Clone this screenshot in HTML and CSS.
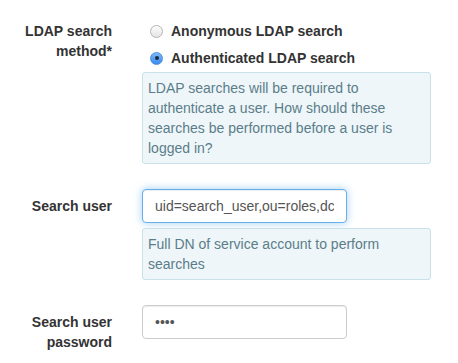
FILE: index.html
```html
<!DOCTYPE html>
<html lang="en">
<head>
    <meta charset="UTF-8">
    <title>LDAP settings</title>
    <link rel="stylesheet" href="styles.css">
</head>
<body>
    <form class="ldap-form">
        <div class="form-row">
            <label class="form-label">LDAP search method*</label>
            <div class="form-control-col">
                <div class="radio-list">
                    <label class="radio"><input type="radio" name="method"> Anonymous LDAP search</label>
                    <label class="radio"><input type="radio" name="method" checked> Authenticated LDAP search</label>
                </div>
                <div class="help-box">
                    LDAP searches will be required to authenticate a user. How should these searches be performed before a user is logged in?
                </div>
            </div>
        </div>

        <div class="form-row">
            <label class="form-label" for="searchUser">Search user</label>
            <div class="form-control-col">
                <input type="text" id="searchUser" class="text-input focused" value="uid=search_user,ou=roles,dc=example,dc=com">
                <div class="help-box">
                    Full DN of service account to perform searches
                </div>
            </div>
        </div>

        <div class="form-row">
            <label class="form-label" for="searchPassword">Search user password</label>
            <div class="form-control-col">
                <input type="password" id="searchPassword" class="text-input" value="pass">
            </div>
        </div>
    </form>
</body>
</html>
```

FILE: styles.css
```css
body {
    margin: 0;
    font-family: "Liberation Sans", Arial, sans-serif;
    font-size: 14px;
    line-height: 20px;
    color: #333;
    background-color: white;
}
.ldap-form {
    padding-top: 21px;
}
.form-row {
    display: grid;
    grid-template-columns: 112px 1fr;
    column-gap: 30px;
    margin-bottom: 25px;
}
.form-label {
    text-align: right;
    font-weight: bold;
    padding-top: 0;
}
.form-row + .form-row .form-label {
    padding-top: 7px;
}
.form-control-col {
    width: 289px;
}
.radio-list {
    padding-left: 8px;
    display: flex;
    flex-direction: column;
    gap: 7px;
}
.radio {
    display: flex;
    align-items: center;
    font-weight: bold;
    height: 20px;
}
.radio input {
    appearance: none;
    width: 13px;
    height: 13px;
    margin: 0 8px 0 0;
    border-radius: 50%;
    border: 1px solid #b5b5b5;
    background: linear-gradient(#fdfdfd, #e4e4e4);
    position: relative;
}
.radio input:checked {
    border-color: #4a8fe0;
    background: linear-gradient(#7fb8f7, #3a8bed);
}
.radio input:checked::after {
    content: "";
    position: absolute;
    left: 3.5px;
    top: 3.5px;
    width: 4px;
    height: 4px;
    border-radius: 50%;
    background-color: #1a2b3c;
}
.help-box {
    margin-top: 4px;
    padding: 5px 5px;
    border: 1px solid #c8e1eb;
    border-radius: 3px;
    background-color: #eef6f9;
    color: #5b7d89;
}
.text-input {
    box-sizing: border-box;
    display: block;
    width: 205px;
    height: 34px;
    padding: 6px 12px;
    font-family: "Liberation Sans", Arial, sans-serif;
    font-size: 14px;
    color: #555;
    border: 1px solid #ccc;
    border-radius: 4px;
    box-shadow: inset 0 1px 1px rgba(0,0,0,0.075);
    outline: none;
}
.text-input.focused {
    border-color: #66afe9;
    box-shadow: inset 0 1px 1px rgba(0,0,0,0.075), 0 0 8px rgba(102,175,233,0.6);
}
.text-input + .help-box {
    margin-top: 5px;
}
```
